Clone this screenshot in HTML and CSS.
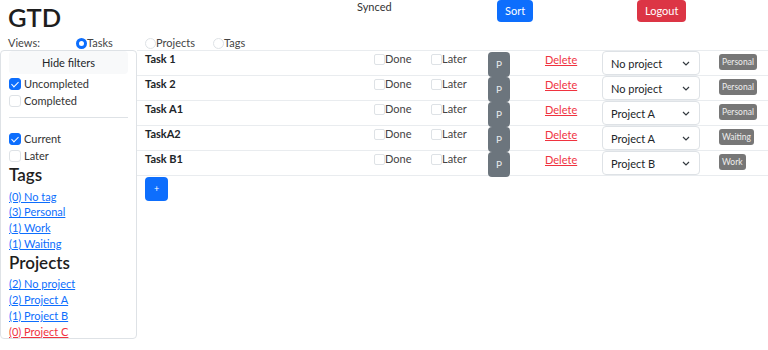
FILE: index.html
```html
<!DOCTYPE HTML>
<html>
	<head>
		<meta name="viewport" content="width=device-width, initial-scale=1">
		<link rel="stylesheet" href="styles.css">
	</head>
	<body>
		<header class="topbar">
			<h1 class="logo">GTD</h1>
			<div class="status">Synced</div>
			<div><button class="btn btn-primary">Sort</button></div>
			<div><button class="btn btn-danger">Logout</button></div>
		</header>
		<div class="views">
			<span>Views:</span>
			<label class="radio"><input type="radio" name="view" checked>Tasks</label>
			<label class="radio"><input type="radio" name="view">Projects</label>
			<label class="radio"><input type="radio" name="view">Tags</label>
		</div>
		<div class="main">
			<aside class="filters">
				<button class="btn btn-light hide-filters">Hide filters</button>
				<div class="checks">
					<label class="check"><input type="checkbox" checked>Uncompleted</label>
					<label class="check"><input type="checkbox">Completed</label>
				</div>
				<div class="hr"></div>
				<div class="checks">
					<label class="check"><input type="checkbox" checked>Current</label>
					<label class="check"><input type="checkbox">Later</label>
				</div>
				<h3 class="filter-title">Tags</h3>
				<div class="links">
					<a href="#">(0) No tag</a>
					<a href="#">(3) Personal</a>
					<a href="#">(1) Work</a>
					<a href="#">(1) Waiting</a>
				</div>
				<h3 class="filter-title">Projects</h3>
				<div class="links">
					<a href="#">(2) No project</a>
					<a href="#">(2) Project A</a>
					<a href="#">(1) Project B</a>
					<a href="#" class="empty">(0) Project C</a>
				</div>
			</aside>
			<section class="tasks">
				<div id="task-rows"></div>
				<button class="btn btn-primary add-task">+</button>
			</section>
		</div>
		<script>
			var tasks = [
				{name: "Task 1", project: "No project", tag: "Personal"},
				{name: "Task 2", project: "No project", tag: "Personal"},
				{name: "Task A1", project: "Project A", tag: "Personal"},
				{name: "TaskA2", project: "Project A", tag: "Waiting"},
				{name: "Task B1", project: "Project B", tag: "Work"}
			];
			var projects = ["No project", "Project A", "Project B", "Project C"];
			var rows = document.getElementById("task-rows");
			tasks.forEach(t => {
				var options = projects.map(p => `<option${p == t.project ? " selected" : ""}>${p}</option>`).join("");
				rows.insertAdjacentHTML('beforeend', `
				<div class="task-row">
					<div class="task-name">${t.name}</div>
					<label class="row-check"><input type="checkbox">Done</label>
					<label class="row-check"><input type="checkbox">Later</label>
					<div><button class="btn btn-secondary p-btn">P</button></div>
					<div><a href="#" class="delete">Delete</a></div>
					<div class="select-wrap">
						<select class="project-select">${options}</select>
						<svg class="chevron" width="8" height="5" viewBox="0 0 8 5"><path d="M1 1l3 3 3-3" fill="none" stroke="#343a40" stroke-width="1.2"/></svg>
					</div>
					<div><span class="badge">${t.tag}</span></div>
				</div>
				`);
			});
		</script>
	</body>
</html>
```

FILE: styles.css
```css
html{
	font-family: Lato, "Open Sans", sans-serif;
	color: #212529;
}
body{
	margin: 0;
	font-size: 11px;
	line-height: 17px;
}
.topbar{
	display: grid;
	grid-template-columns: 349px 140px 140px 1fr;
	height: 36px;
	padding-left: 8px;
}
.logo{
	margin: 0;
	font-size: 25.5px;
	font-weight: 600;
	line-height: 34px;
	color: #1e1e1e;
}
.status{
	line-height: 14px;
	color: #333;
}
.btn{
	font-family: inherit;
	font-size: 11px;
	line-height: 16px;
	padding: 3px 8px;
	border: none;
	border-radius: 4px;
	cursor: pointer;
}
.btn-primary{
	background-color: #0d6efd;
	color: white;
}
.btn-danger{
	background-color: #dc3545;
	color: white;
}
.btn-secondary{
	background-color: #6c757d;
	color: white;
}
.btn-light{
	background-color: #f8f9fa;
	color: #212529;
}
.views{
	display: grid;
	grid-template-columns: 68px 69px 68px 68px;
	height: 14px;
	line-height: 14px;
	padding-left: 8px;
	color: #444;
}
.radio{
	display: flex;
	align-items: center;
}
.radio input{
	appearance: none;
	box-sizing: border-box;
	width: 11px;
	height: 11px;
	margin: 0;
	border: 1px solid #dee2e6;
	border-radius: 50%;
	background: white;
}
.radio input:checked{
	border: 3px solid #0d6efd;
}
.main{
	display: flex;
	align-items: flex-start;
}
.filters{
	box-sizing: border-box;
	width: 137px;
	height: 289px;
	flex-shrink: 0;
	padding: 0 8px;
	border: 1px solid #dee2e6;
	border-radius: 4px;
}
.hide-filters{
	display: block;
	width: 100%;
	height: 23px;
	padding: 0;
}
.checks{
	padding-top: 1px;
}
.check{
	display: flex;
	align-items: center;
	height: 17px;
	color: #333;
}
.check input, .row-check input{
	appearance: none;
	box-sizing: border-box;
	position: relative;
	width: 12px;
	height: 12px;
	margin: 0 3px 0 0;
	border: 1px solid #dee2e6;
	border-radius: 3px;
	background: white;
}
.check input:checked{
	border-color: #0d6efd;
	background: #0d6efd;
}
.check input:checked::after{
	content: "";
	position: absolute;
	left: 3px;
	top: 1px;
	width: 3px;
	height: 6px;
	border: solid white;
	border-width: 0 1.5px 1.5px 0;
	transform: rotate(45deg);
}
.hr{
	height: 1px;
	background-color: #dee2e6;
	margin: 8px 0 11px;
}
.filter-title{
	margin: 0 0 3.5px;
	font-size: 17px;
	font-weight: 600;
	line-height: 21px;
	color: #1e1e1e;
}
.links a{
	display: block;
	line-height: 15.8px;
	color: #0d6efd;
}
.links a.empty{
	color: #f0333f;
}
.tasks{
	flex: 1;
	border-top: 1px solid #e9ecef;
}
.task-row{
	display: grid;
	grid-template-columns: 237px 57px 57px 57px 57px 117px 1fr;
	align-items: start;
	height: 24px;
	border-bottom: 1px solid #e9ecef;
}
.task-name{
	padding-left: 8px;
	font-weight: 700;
	line-height: 16px;
}
.row-check{
	display: flex;
	align-items: center;
	line-height: 16px;
	color: #444;
}
.row-check input{
	width: 11px;
	height: 11px;
	margin: 0;
	border-radius: 2px;
}
.p-btn{
	width: 22px;
	height: 25px;
	padding: 0;
	margin-top: 1px;
	font-size: 10px;
	line-height: 25px;
	color: #e9ecef;
}
.delete{
	color: #f0333f;
	line-height: 16px;
}
.select-wrap{
	position: relative;
	width: 98px;
}
.project-select{
	appearance: none;
	box-sizing: border-box;
	width: 98px;
	height: 24px;
	padding: 0 0 0 8px;
	border: 1px solid #dee2e6;
	border-radius: 4px;
	background: white;
	font-family: inherit;
	font-size: 11px;
	color: #212529;
}
.chevron{
	position: absolute;
	right: 10px;
	top: 10px;
}
.badge{
	display: inline-block;
	margin-top: 3px;
	padding: 0 3px;
	background-color: #777;
	border-radius: 3px;
	font-size: 8.5px;
	line-height: 16px;
	color: #eee;
}
.add-task{
	width: 23px;
	height: 24px;
	margin: 1px 0 0 8px;
	padding: 0;
	font-size: 9px;
}
```
